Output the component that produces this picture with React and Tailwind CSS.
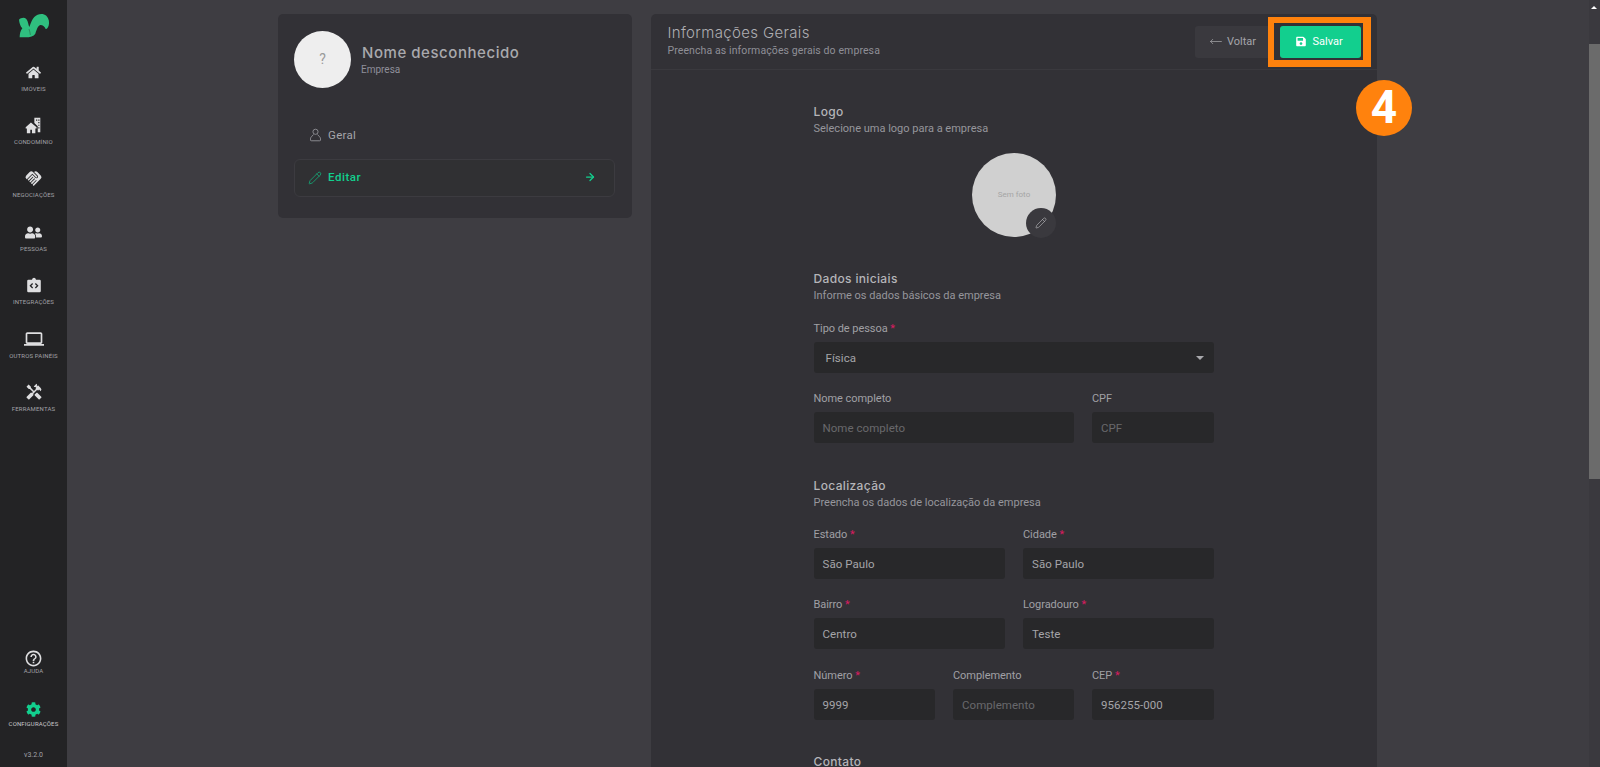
import React from "react";
import { FaHome, FaUserFriends, FaCog, FaSave } from "react-icons/fa";
import { MdLaptop, MdHelpOutline, MdHandshake, MdHandyman } from "react-icons/md";
import { LuPencil, LuArrowRight, LuMoveLeft } from "react-icons/lu";

const Condo = () => (
  <svg viewBox="0 0 20 20" className="w-[17px] h-[17px]" fill="currentColor">
    <path d="M11 1h7v17h-3v-7L11 7.200z" />
    <path d="M7 6.500 0.800 12v1.600h1.400V19h4v-4h2v4h4v-5.400h1.400V12z" />
    <path d="M13 3h1.400v1.400H13zM15.600 3H17v1.400h-1.400zM15.600 6H17v1.400h-1.400zM15.600 9H17v1.400h-1.400zM15.600 12H17v1.400h-1.400z" fill="#232325" />
  </svg>
);

const Integ = () => (
  <svg viewBox="0 0 20 20" className="w-[16px] h-[16px]" fill="currentColor">
    <path d="M3 3.500h4.500C7.800 2 8.800 1 10 1s2.200 1 2.500 2.500H17a1.500 1.500 0 0 1 1.500 1.500v12.500A1.500 1.500 0 0 1 17 19H3a1.500 1.500 0 0 1-1.500-1.500V5A1.500 1.500 0 0 1 3 3.500z" />
    <path d="M8.300 8.200 5.500 11l2.800 2.800M11.700 8.200l2.800 2.800-2.800 2.800" fill="none" stroke="#232325" strokeWidth="1.600" />
  </svg>
);

const NavItem = ({ top, icon, label, active, gap = "mt-[3px]" }) => (
  <div className="absolute left-0 w-[67px] flex flex-col items-center" style={{ top }}>
    <div className={`h-[20px] flex items-center justify-center ${active ? "text-[#12cf8e]" : "text-[#dedee0]"}`}>{icon}</div>
    <div className={`${gap} text-[6px] leading-[8px] tracking-[0.15px] whitespace-nowrap ${active ? "text-[#c8c8cc]" : "text-[#a2a2a8]"}`}>{label}</div>
  </div>
);

const Req = () => <span className="text-[#d81b60]"> *</span>;

const Field = ({ left, top, width, label, req, value, placeholder, pad = "pl-[9px]" }) => (
  <div className="absolute" style={{ left, top, width }}>
    <div className="h-[14px] text-[11px] leading-[14px] tracking-[-0.05px] text-[#a0a0a5] whitespace-nowrap">{label}{req && <Req />}</div>
    <div className={`absolute left-0 top-[20px] w-full h-[31px] rounded-[3px] bg-[#28282a] ${pad} pt-[2.500px] flex items-center text-[11.500px] tracking-[0.05px] whitespace-nowrap ${value ? "text-[#a5a5a9]" : "text-[#68686c]"}`}>
      {value || placeholder}
    </div>
  </div>
);

const Section = ({ top, title, sub }) => (
  <div className="absolute left-[813.500px]" style={{ top }}>
    <div className="text-[12px] leading-[16px] font-medium text-[#b5b5b9] tracking-[0.35px] font-[family-name:Inter,sans-serif] whitespace-nowrap">{title}</div>
    <div className="text-[11px] leading-[17px] text-[#96969c] whitespace-nowrap">{sub}</div>
  </div>
);

export default function App() {
  return (
    <div className="relative w-[1600px] h-[767px] overflow-hidden bg-[#3e3d42] font-[family-name:Roboto,sans-serif]">
      {/* Sidebar */}
      <div className="absolute left-0 top-0 w-[67px] h-full bg-[#232325]">
        <svg viewBox="50 35 100 80" className="absolute left-[16.700px] top-[11.700px] w-[33.300px] h-[26.700px]">
          <path fill="#2fbf7f" d="M56 58 C62 52 72 50 78 56 C84 64 84 74 87 80 C92 66 96 56 102 50 C112 40 128 38 138 46 C146 54 148 66 145 76 C142 84 138 86 136 86 C134 80 128 74 120 74 C112 76 108 92 105 100 C100 108 90 111 75 111 L58 111 C58 102 60 92 66 84 C60 78 57 68 56 58 Z" />
          <path d="M86 86 C88 92 90 98 90 104" fill="none" stroke="#232325" strokeWidth="1" />
        </svg>
        <NavItem top={62} icon={<FaHome size={15} />} label="IMÓVEIS" />
        <NavItem top={115} icon={<Condo />} label="CONDOMÍNIO" />
        <NavItem top={168} icon={<MdHandshake size={19} />} label="NEGOCIAÇÕES" />
        <NavItem top={222} icon={<FaUserFriends size={17} />} label="PESSOAS" />
        <NavItem top={275} icon={<Integ />} label="INTEGRAÇÕES" />
        <NavItem top={329} icon={<MdLaptop size={20} />} label="OUTROS PAINÉIS" />
        <NavItem top={382} icon={<MdHandyman size={18} />} label="FERRAMENTAS" />
        <NavItem top={648} icon={<MdHelpOutline size={19} />} label="AJUDA" gap="mt-[-1px]" />
        <NavItem top={699} icon={<FaCog size={15} />} label="CONFIGURAÇÕES" active gap="mt-[1px]" />
        <div className="absolute w-[67px] top-[750px] text-center text-[7px] leading-[10px] text-[#a2a2a8]">v3.2.0</div>
      </div>

      {/* Left card */}
      <div className="absolute left-[278px] top-[14px] w-[354px] h-[204px] rounded-[5px] bg-[#323136]" />
      <div className="absolute left-[294px] top-[31px] w-[57px] h-[57px] rounded-full bg-[#eeeeee] flex items-center justify-center text-[14px] text-[#9a9a9a]">?</div>
      <div className="absolute left-[362px] top-[43px] text-[15px] leading-[20px] font-medium tracking-[0.55px] text-[#a9a9ad] font-[family-name:Inter,sans-serif] whitespace-nowrap">Nome desconhecido</div>
      <div className="absolute left-[361px] top-[62px] text-[10px] leading-[16px] text-[#8f8f9a] whitespace-nowrap">Empresa</div>
      <svg viewBox="0 0 12 14" className="absolute left-[310px] top-[128px] w-[11px] h-[14px] text-[#9a9aa0]" fill="none" stroke="currentColor" strokeWidth="0.900">
        <circle cx="6" cy="3.500" r="2.800" />
        <path d="M3.800 6.500 1.500 9c-.7.800-1 1.300-1 2.200v1.300c0 .4.300.8.800.8h9.400c.5 0 .8-.4.800-.8v-1.300c0-.9-.3-1.400-1-2.200L8.200 6.500" />
      </svg>
      <div className="absolute left-[328px] top-[127px] text-[11.500px] leading-[16px] tracking-[0.3px] text-[#a5a5aa]">Geral</div>
      <div className="absolute left-[294px] top-[159px] w-[321px] h-[38px] rounded-[6px] border border-[#3c3b40] bg-[#303033]" />
      <LuPencil className="absolute left-[308px] top-[171px] w-[14px] h-[14px] text-[#12b57e]" strokeWidth={1.300} />
      <div className="absolute left-[328px] top-[169px] text-[11.500px] leading-[16px] font-medium tracking-[0.55px] text-[#12cf8e]">Editar</div>
      <LuArrowRight className="absolute left-[584px] top-[171px] w-[12px] h-[12px] text-[#12cf8e]" strokeWidth={2.500} />

      {/* Right card */}
      <div className="absolute left-[651px] top-[14px] w-[726px] h-[760px] rounded-t-[5px] bg-[#323136]" />
      <div className="absolute left-[651px] top-[69px] w-[726px] h-px bg-[#3a393e]" />
      <div className="absolute left-[667.500px] top-[22px] text-[15px] leading-[22px] tracking-[0.35px] text-[#aeaeb2] font-[family-name:Inter,sans-serif] font-light whitespace-nowrap">Informações Gerais</div>
      <div className="absolute left-[667.500px] top-[43px] text-[10.500px] leading-[16px] tracking-[0.1px] text-[#8f8f96] whitespace-nowrap">Preencha as informações gerais do empresa</div>

      {/* Voltar */}
      <div className="absolute left-[1195px] top-[26px] w-[80px] h-[32px] rounded-[3px] bg-[#3a393e]" />
      <LuMoveLeft className="absolute left-[1209px] top-[35px] w-[14px] h-[13px] text-[#a9a9ad]" strokeWidth={1.300} />
      <div className="absolute left-[1227px] top-[34px] text-[11px] leading-[16px] text-[#a5a5aa]">Voltar</div>
      {/* Salvar */}
      <div className="absolute left-[1268px] top-[17px] w-[103px] h-[50px] border-solid border-l-[6px] border-r-[8px] border-t-[6px] border-b-[7px] border-[#ff820d] bg-[#323136]" />
      <div className="absolute left-[1280px] top-[26px] w-[81px] h-[32px] rounded-[3px] bg-[#12cf8e] text-white">
        <FaSave className="absolute left-[16px] top-[10px] w-[10px] h-[11px]" />
        <span className="absolute left-[32.500px] top-[8px] text-[11px] leading-[16px]">Salvar</span>
      </div>
      <div className="absolute left-[1356px] top-[79.500px] w-[56px] h-[56px] rounded-full bg-[#ff820d] flex items-center justify-center text-white text-[46px] font-bold font-[family-name:'Liberation_Sans',sans-serif]">4</div>

      {/* Logo */}
      <Section top={104} title="Logo" sub="Selecione uma logo para a empresa" />
      <div className="absolute left-[972px] top-[153px] w-[84px] h-[84px] rounded-full bg-[#d0d0d0] flex items-center justify-center text-[8px] text-[#a5a5a5]">Sem foto</div>
      <div className="absolute left-[1026px] top-[208px] w-[30px] h-[30px] rounded-full bg-[#3a393e] flex items-center justify-center">
        <LuPencil className="w-[12px] h-[12px] text-[#b5b5b8]" strokeWidth={1.300} />
      </div>

      {/* Dados iniciais */}
      <Section top={271} title="Dados iniciais" sub="Informe os dados básicos da empresa" />
      <Field left={813.5} top={322} width={400.5} label="Tipo de pessoa" req value="Física" pad="pl-[12px]" />
      <div className="absolute left-[1196px] top-[356px] w-0 h-0 border-x-[4px] border-x-transparent border-t-[4px] border-t-[#a9a9ad]" />
      <Field left={813.5} top={392} width={260.5} label="Nome completo" placeholder="Nome completo" />
      <Field left={1092} top={392} width={122} label="CPF" placeholder="CPF" />

      {/* Localização */}
      <Section top={478} title="Localização" sub="Preencha os dados de localização da empresa" />
      <Field left={813.5} top={528} width={191.5} label="Estado" req value="São Paulo" />
      <Field left={1023} top={528} width={191} label="Cidade" req value="São Paulo" />
      <Field left={813.5} top={598} width={191.5} label="Bairro" req value="Centro" />
      <Field left={1023} top={598} width={191} label="Logradouro" req value="Teste" />
      <Field left={813.5} top={669} width={121.5} label="Número" req value="9999" />
      <Field left={953} top={669} width={121} label="Complemento" placeholder="Complemento" />
      <Field left={1092} top={669} width={122} label="CEP" req value="956255-000" />
      <div className="absolute left-[813.500px] top-[756px] text-[12px] leading-[11px] font-medium text-[#b5b5b9] tracking-[0.35px] font-[family-name:Inter,sans-serif]">Contato</div>

      {/* Scrollbar */}
      <div className="absolute right-0 top-0 w-[11px] h-full bg-[#3a393e]" />
      <div className="absolute right-[0px] top-[44px] w-[11px] h-[435px] bg-[#6b6b6b]" />
      <div className="absolute left-[1591px] top-[6px] w-0 h-0 border-x-[3px] border-x-transparent border-b-[3px] border-b-white" />
    </div>
  );
}
